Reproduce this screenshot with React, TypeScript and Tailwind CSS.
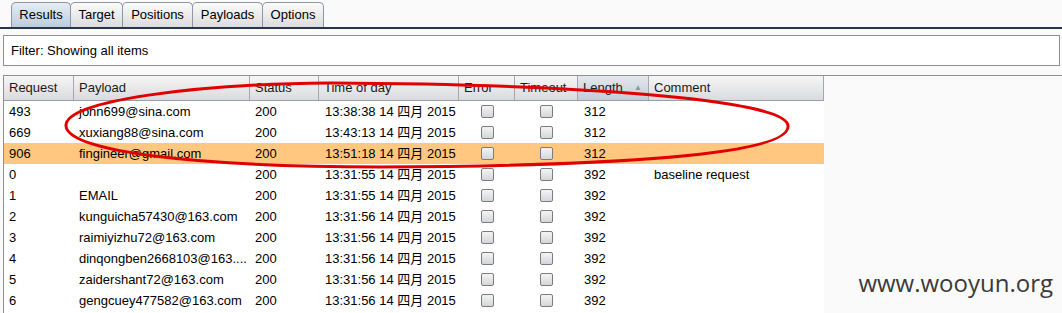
import React from 'react';

const font = { fontFamily: '"Liberation Sans", Arial, "Noto Sans CJK SC", sans-serif' };

const tabs = [
  { label: 'Results', w: 'w-[60px]', active: true },
  { label: 'Target', w: 'w-[53px]' },
  { label: 'Positions', w: 'w-[71px]' },
  { label: 'Payloads', w: 'w-[71px]' },
  { label: 'Options', w: 'w-[62px]' },
];

const cols = [
  { key: 'req', title: 'Request', w: 'w-[70px]' },
  { key: 'payload', title: 'Payload', w: 'w-[176px]' },
  { key: 'status', title: 'Status', w: 'w-[69px]' },
  { key: 'time', title: 'Time of day', w: 'w-[140px]' },
  { key: 'error', title: 'Error', w: 'w-[56px]' },
  { key: 'timeout', title: 'Timeout', w: 'w-[63px]' },
  { key: 'length', title: 'Length', w: 'w-[71px]', sorted: true },
  { key: 'comment', title: 'Comment', w: 'w-[175px]' },
];

const rows = [
  { req: '493', payload: 'john699@sina.com', time: '13:38:38', len: '312' },
  { req: '669', payload: 'xuxiang88@sina.com', time: '13:43:13', len: '312' },
  { req: '906', payload: 'fingineer@gmail.com', time: '13:51:18', len: '312', hl: true },
  { req: '0', payload: '', time: '13:31:55', len: '392', comment: 'baseline request' },
  { req: '1', payload: 'EMAIL', time: '13:31:55', len: '392' },
  { req: '2', payload: 'kunguicha57430@163.com', time: '13:31:56', len: '392' },
  { req: '3', payload: 'raimiyizhu72@163.com', time: '13:31:56', len: '392' },
  { req: '4', payload: 'dinqongben2668103@163....', time: '13:31:56', len: '392' },
  { req: '5', payload: 'zaidershant72@163.com', time: '13:31:56', len: '392' },
  { req: '6', payload: 'gengcuey477582@163.com', time: '13:31:56', len: '392' },
];

function Check() {
  return (
    <span className="block h-[13px] w-[13px] rounded-[2px] border border-[#7c7c7c] bg-gradient-to-b from-[#f4f4f4] to-[#d4d6da]" />
  );
}

export default function App() {
  return (
    <div className="relative h-[313px] w-[1062px] overflow-hidden bg-[#fafafa] text-[13px] text-black" style={font}>
      {/* tabs */}
      <div className="flex items-end pl-[11px] pt-[2px] border-b-2 border-[#263450] h-[29px]">
        {tabs.map((t) => (
          <div
            key={t.label}
            className={`${t.w} h-[25px] -mr-px flex items-center justify-center rounded-t-[5px] border border-b-0 border-[#8d96a2] ${
              t.active
                ? 'bg-gradient-to-b from-[#e6edf4] to-[#bccddd]'
                : 'bg-gradient-to-b from-[#fbfbfb] to-[#dcdcdc]'
            }`}
          >
            {t.label}
          </div>
        ))}
      </div>

      {/* filter */}
      <div className="mt-[6px] ml-[3px] mr-[2px] h-[31px] border border-[#8f8f8f] bg-white flex items-center pl-[7px] text-[13px]">
        Filter: Showing all items
      </div>

      {/* table */}
      <div className="mt-[9px] ml-[3px] border-t border-l border-[#8f8f8f] h-[240px]">
        <div className="w-[820px] bg-white h-full">
          <div className="flex h-[25px] border-b border-[#9a9ea6]">
            {cols.map((c) => (
              <div
                key={c.key}
                className={`${c.w} shrink-0 flex items-center pl-[5px] border-r border-[#a4a8ae] ${
                  c.sorted
                    ? 'bg-gradient-to-b from-[#e3e8ee] to-[#c4ccd6]'
                    : 'bg-gradient-to-b from-[#f6f6f6] to-[#dadbde]'
                }`}
              >
                <span className="text-[#1a1a1a]">{c.title}</span>
                {c.sorted && <span className="ml-auto mr-[6px] text-[8px] text-[#8a96a6]">▲</span>}
              </div>
            ))}
          </div>
          {rows.map((r) => (
            <div key={r.req} className={`flex h-[21px] items-center ${r.hl ? 'bg-[#ffc77f]' : ''}`}>
              <div className="w-[70px] shrink-0 pl-[5px]">{r.req}</div>
              <div className="w-[176px] shrink-0 pl-[5px] whitespace-nowrap">{r.payload}</div>
              <div className="w-[69px] shrink-0 pl-[5px]">200</div>
              <div className="w-[140px] shrink-0 pl-[6px] whitespace-nowrap">{r.time} 14 四月 2015</div>
              <div className="w-[56px] shrink-0 flex justify-center"><Check /></div>
              <div className="w-[63px] shrink-0 flex justify-center"><Check /></div>
              <div className="w-[71px] shrink-0 pl-[6px]">{r.len}</div>
              <div className="w-[175px] shrink-0 pl-[5px] whitespace-nowrap">{r.comment}</div>
            </div>
          ))}
        </div>
      </div>

      {/* red annotation */}
      <svg className="pointer-events-none absolute left-0 top-0" width="1062" height="313">
        <path
          d="M 788 127 C 792 98, 560 84, 330 83 C 200 84, 64 100, 66 126 C 68 152, 200 167, 380 167 C 600 166, 786 156, 788 127 Z"
          fill="none"
          stroke="#e00000"
          strokeWidth="3"
        />
      </svg>

      {/* watermark */}
      <div
        className="absolute right-[9px] top-[265px] text-[24px] text-[#3a3a3a]"
        style={{ fontFamily: '"Open Sans", sans-serif' }}
      >
        www.wooyun.org
      </div>
    </div>
  );
}
